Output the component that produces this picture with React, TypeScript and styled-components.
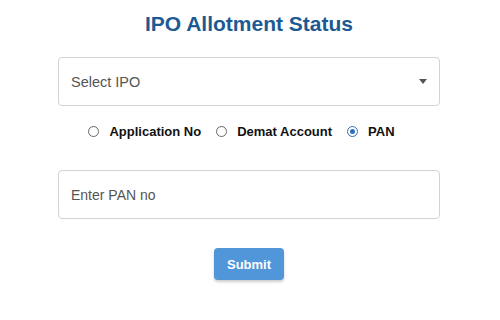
import { useState } from "react";
import styled, { createGlobalStyle } from "styled-components";

const GlobalStyle = createGlobalStyle`
  html, body {
    margin: 0;
    padding: 0;
    background: #ffffff;
    font-family: "Liberation Sans", Arial, sans-serif;
  }
`;

const Page = styled.div`
  width: 498px;
  height: 320px;
  display: flex;
  flex-direction: column;
  align-items: center;
`;

const Title = styled.h1`
  margin: 12px 0 0;
  font-size: 21px;
  line-height: 24px;
  font-weight: 700;
  color: #1d5a93;
`;

const Field = styled.div<{ $top: number }>`
  position: relative;
  margin-top: ${(p) => p.$top}px;
  width: 382px;
  height: 49px;
  box-sizing: border-box;
  border: 1px solid #d3d3d3;
  border-radius: 4px;
  display: flex;
  align-items: center;
  padding: 0 12px;
  background: #fff;
`;

const Placeholder = styled.span`
  font-size: 14.5px;
  color: #555;
  flex: 1;
`;

const TextInput = styled.input`
  border: none;
  outline: none;
  padding: 0;
  flex: 1;
  font-family: inherit;
  font-size: 14px;
  color: #333;
  background: transparent;

  &::placeholder {
    color: #555;
  }
`;

const Caret = styled.span`
  width: 0;
  height: 0;
  border-left: 4.5px solid transparent;
  border-right: 4.5px solid transparent;
  border-top: 5px solid #555;
`;

const RadioRow = styled.div`
  margin-top: 15px;
  height: 20px;
  display: flex;
  align-items: center;
`;

const RadioLabel = styled.label`
  display: flex;
  align-items: center;
  margin-right: 15px;
  font-size: 13px;
  font-weight: 700;
  color: #111;
  cursor: pointer;
`;

const Radio = styled.input`
  appearance: none;
  margin: 0 10px 0 0;
  width: 11px;
  height: 11px;
  box-sizing: border-box;
  border: 1px solid #666;
  border-radius: 50%;
  display: grid;
  place-items: center;

  &:checked {
    border-color: #2f6fc0;
  }
  &:checked::after {
    content: "";
    width: 5px;
    height: 5px;
    border-radius: 50%;
    background: #2f6fc0;
  }
`;

const SubmitButton = styled.button`
  margin-top: 29px;
  width: 70px;
  height: 32px;
  border: none;
  border-radius: 4px;
  background: #5096d8;
  color: #fff;
  font-family: inherit;
  font-size: 13px;
  font-weight: 700;
  box-shadow: 0 2px 3px rgba(0, 0, 0, 0.2);
  cursor: pointer;
`;

const options = ["Application No", "Demat Account", "PAN"];

export default function App() {
  const [mode, setMode] = useState("PAN");

  return (
    <>
      <GlobalStyle />
      <Page>
        <Title>IPO Allotment Status</Title>
        <Field $top={21}>
          <Placeholder>Select IPO</Placeholder>
          <Caret />
        </Field>
        <RadioRow>
          {options.map((o) => (
            <RadioLabel key={o}>
              <Radio
                type="radio"
                name="mode"
                checked={mode === o}
                onChange={() => setMode(o)}
              />
              {o}
            </RadioLabel>
          ))}
        </RadioRow>
        <Field $top={29}>
          <TextInput placeholder="Enter PAN no" />
        </Field>
        <SubmitButton>Submit</SubmitButton>
      </Page>
    </>
  );
}
